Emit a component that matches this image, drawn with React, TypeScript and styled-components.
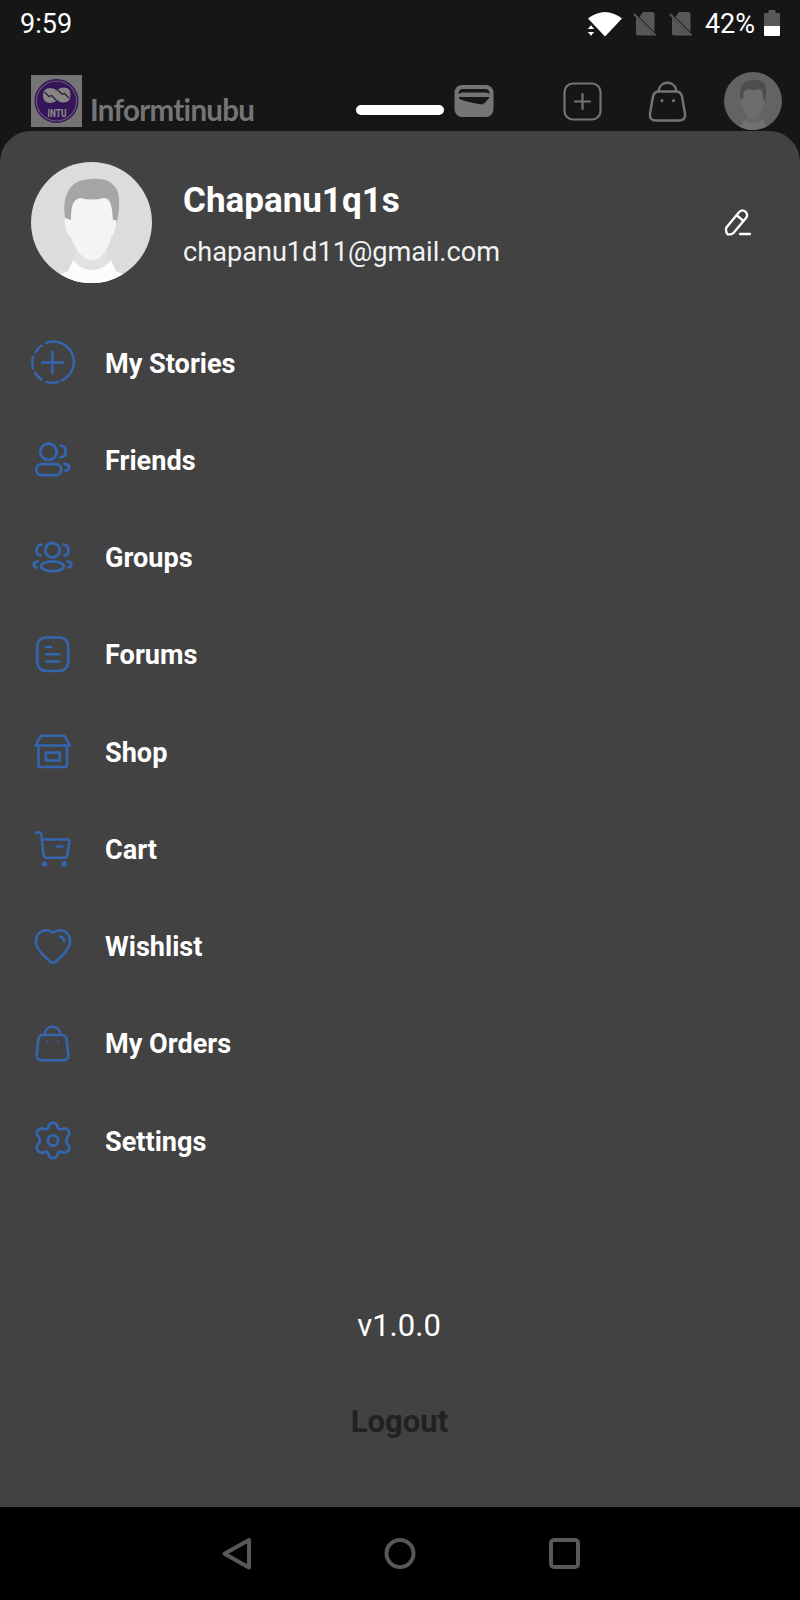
import React from "react";
import styled, { createGlobalStyle } from "styled-components";

const GlobalStyle = createGlobalStyle`
  *, *::before, *::after { box-sizing: border-box; }
  html, body { margin: 0; padding: 0; background: #161616; }
  body { font-family: Roboto, "Liberation Sans", sans-serif; color: #fff; }
  svg { display: block; flex: none; }
`;

const Screen = styled.div`
  width: 800px;
  height: 1600px;
  display: flex;
  flex-direction: column;
  background: #161616;
  overflow: hidden;
`;

const StatusBar = styled.header`
  height: 47px;
  display: flex;
  align-items: center;
  padding: 0 20px 0 20px;
  font-size: 27px;
  line-height: 46px;
`;

const Clock = styled.span`
  flex: 1;
`;

const StatusIcons = styled.div`
  display: flex;
  align-items: center;
`;

const Battery = styled.span`
  margin: 0 9px 0 12px;
  padding-top: 1px;
`;

const AppBar = styled.div`
  height: 84px;
  padding: 0 18px 0 31px;
  display: flex;
  align-items: flex-start;
`;

const Logo = styled.div`
  margin-top: 28px;
`;

const Brand = styled.span`
  flex: none;
  width: 274px;
  padding-left: 8px;
  margin-top: 44px;
  font-family: Lato, sans-serif;
  font-weight: 700;
  font-size: 29.500px;
  line-height: 38px;
  letter-spacing: -0.7px;
  font-variant-ligatures: none;
  color: #757575;
`;

const Grabber = styled.div`
  width: 88px;
  height: 10px;
  margin-top: 58px;
  border-radius: 5px;
  background: #fff;
`;

const Slot = styled.div<{ $left: number; $top: number }>`
  margin-left: ${(p) => p.$left}px;
  margin-top: ${(p) => p.$top}px;
`;

const Sheet = styled.main`
  height: 1376px;
  flex: none;
  display: flex;
  flex-direction: column;
  border-radius: 31px 31px 0 0;
  background: #424242;
`;

const Profile = styled.section`
  display: flex;
  align-items: center;
  height: 121px;
  margin-top: 31px;
  padding: 0 48px 0 31px;
`;

const ProfileText = styled.div`
  flex: 1;
  padding: 3px 0 0 31px;
`;

const Name = styled.h1`
  margin: 0;
  font-size: 35px;
  line-height: 44px;
  font-weight: 700;
`;

const Email = styled.p`
  margin: 11px 0 0;
  font-size: 27.150px;
  line-height: 36px;
  color: #f2f2f2;
`;

const Menu = styled.nav`
  display: flex;
  flex-direction: column;
  margin-top: 31px;
`;

const MenuItem = styled.a`
  display: flex;
  align-items: center;
  height: 97.25px;
  padding-left: 30px;
  gap: 30px;
  font-size: 27.100px;
  font-weight: 700;
  line-height: 36px;
`;

const MenuLabel = styled.span`
  padding-top: 2px;
`;

const Version = styled.p`
  margin: 117px 2px 0 0;
  text-align: center;
  font-size: 31px;
  line-height: 40px;
`;

const Logout = styled.button`
  margin: 56px auto 0;
  padding: 0 1px 0 0;
  border: 0;
  background: none;
  font: 700 31px/40px Roboto, "Liberation Sans", sans-serif;
  color: #212121;
`;

const NavBar = styled.footer`
  height: 93px;
  flex: none;
  display: flex;
  align-items: center;
  justify-content: center;
  gap: 129px;
  background: #000;
`;

/* Each glyph is drawn on a 45x45 grid centred on 22.5, 22.5. */
const Glyph = ({ children }: { children: React.ReactNode }) => (
  <svg width="45" height="45" viewBox="0 0 45 45" fill="none" stroke="#3366ae" strokeWidth="2.8" strokeLinecap="round" strokeLinejoin="round">
    {children}
  </svg>
);

const StoriesIcon = () => (
  <Glyph>
    <g strokeWidth="2.500">
      <path d="M16 3A20.300 20.300 0 0 1 32 40.300M28.500 41.900A20.300 20.300 0 0 1 16.500 41.900M11.500 39.600A20.300 20.300 0 0 1 5.300 33M3 28A20.300 20.300 0 0 1 3 16.800M5.400 12.300A20.300 20.300 0 0 1 11.500 5.800" />
      <path d="M22.500 12v21M12 22.500h21" />
    </g>
  </Glyph>
);

const FriendsIcon = () => (
  <Glyph>
    <circle cx="18.500" cy="14.700" r="8.200" />
    <rect x="6.200" y="27.200" width="25" height="11" rx="5.500" />
    <path d="M30.500 8.700c7 0 7 11.300 0 11.500M34.500 26.800c6 .8 6 5.700 1 6.800" />
  </Glyph>
);

const GroupsIcon = () => (
  <Glyph>
    <circle cx="22.500" cy="15.200" r="7.200" />
    <ellipse cx="22.500" cy="31.200" rx="11.300" ry="4.900" />
    <path d="M33.500 9.700c6.500 0 6.500 10.300 1 11M11.500 9.700c-6.500 0-6.500 10.300-1 11M37.500 26.500c5 1 5 4.500 .8 6M7.500 26.500c-5 1-5 4.500-.8 6" />
  </Glyph>
);

const ForumsIcon = () => (
  <Glyph>
    <rect x="7.200" y="5.500" width="31" height="33.500" rx="8.500" strokeWidth="2.600" />
    <path d="M16 15h5M16 22.300h13.500M16 29.600h13.500" strokeWidth="2.500" />
  </Glyph>
);

const ShopIcon = () => (
  <Glyph>
    <path d="M11 6.800h23.500l5.500 9.700H5.500zM8.500 16.500v19.500q0 2 2 2h24.500q2 0 2-2v-19.500M15.800 23.500h14v8h-14z" strokeWidth="2.600" />
  </Glyph>
);

const CartIcon = () => (
  <Glyph>
    <path d="M6 6.500h3.500q1.500 0 1.700 1.700l2.300 20.500q.3 3 3 3h18q2.500 0 2.800-2.600l1.900-13q.3-2.600-2.300-2.600H12M26.500 20.500h6" strokeWidth="2.500" />
    <g fill="#3366ae" stroke="none">
      <circle cx="14.500" cy="38" r="2.700" />
      <circle cx="34.300" cy="38" r="2.700" />
    </g>
  </Glyph>
);

const HeartIcon = () => (
  <Glyph>
    <path d="M23 8.800C16.500 3.800 6 6.500 6 17.500 6 25.500 16 34 20.800 38q2.200 1.700 4.400 0C30 34 40 25.500 40 17.500 40 6.500 29.500 3.800 23 8.800Z" strokeWidth="2.500" />
    <path d="M30 12.500q4 .8 4.200 4.500" />
  </Glyph>
);

const BagIcon = () => (
  <Glyph>
    <path d="M13.500 14h18q4.500 0 5.200 4.500l1.500 15q.6 5.800-5.500 5.800H12.200q-6.100 0-5.500-5.800l1.600-15q.7-4.500 5.200-4.500ZM14.500 13.500c1-10.500 15-10.500 16 0" strokeWidth="2.500" />
    <path d="M17.300 20.500v.1M28 20.500v.1" strokeWidth="2.200" />
  </Glyph>
);

const GearIcon = () => (
  <Glyph>
    <circle cx="23" cy="22.500" r="5.200" />
    <path d="M18.500 9C18.500 3.500 27.500 3.500 27.500 9 28 11 29.500 11.800 31.800 11 37 8 42 15.500 37.500 19 36 20.300 36 24.700 37.500 26 42 29.500 37 37 31.800 34 29.500 33.200 28 34 27.500 36 27.500 41.500 18.500 41.500 18.500 36 18 34 16.500 33.200 14.200 34 9 37 4 29.500 8.500 26 10 24.700 10 20.300 8.500 19 4 15.500 9 8 14.200 11 16.500 11.800 18 11 18.500 9Z" />
  </Glyph>
);

const items: { label: string; Icon: () => React.JSX.Element }[] = [
  { label: "My Stories", Icon: StoriesIcon },
  { label: "Friends", Icon: FriendsIcon },
  { label: "Groups", Icon: GroupsIcon },
  { label: "Forums", Icon: ForumsIcon },
  { label: "Shop", Icon: ShopIcon },
  { label: "Cart", Icon: CartIcon },
  { label: "Wishlist", Icon: HeartIcon },
  { label: "My Orders", Icon: BagIcon },
  { label: "Settings", Icon: GearIcon },
];

type AvatarColors = { bg: string; hair: string; face: string; shirt: string; neck: string };
const bright: AvatarColors = { bg: "#dcdcdc", hair: "#a6a6a6", face: "#f4f4f4", shirt: "#fcfcfc", neck: "#e2e2e2" };
const dimmed: AvatarColors = { bg: "#636363", hair: "#4d4d4d", face: "#6d6d6d", shirt: "#717171", neck: "#676767" };

const Avatar = ({ size, colors, id }: { size: number; colors: AvatarColors; id: string }) => (
  <svg width={size} height={size} viewBox="0 0 121 121">
    <clipPath id={id}>
      <circle cx="60.500" cy="60.500" r="60.500" />
    </clipPath>
    <g clipPath={`url(#${id})`}>
      <rect width="121" height="121" fill={colors.bg} />
      <path d="M44 90h33v14l3 17H40l4-17z" fill={colors.neck} />
      <path d="M42 98l-5 11-14 6v7h75v-7l-13-6-5-11-2 2q-5 7-17 8-12-1-17-8z" fill={colors.shirt} />
      <path d="M35 61C30 37 36 17 61 17c13-1 19 3 21 6 8 6 7 22 4 37l-8 4H40z" fill={colors.hair} />
      <path d="M40 58c0-12 1-20 9-22q12 3 24 0c7 0 8 9 9 22l3 0q1 2-1 9-1 6-4 8C77 88 70 98 61 98S44 88 40 75q-4-2-5-8-2-7-1-11z" fill={colors.face} />
    </g>
  </svg>
);

const LogoMark = () => (
  <svg width="51" height="52" viewBox="0 0 51 52">
    <rect width="51" height="52" fill="#747474" />
    <circle cx="25.500" cy="26" r="21.300" fill="#6a5d78" stroke="#351458" strokeWidth="1.400" />
    <circle cx="25.500" cy="26" r="19.500" fill="#351458" />
    <g fill="#858585">
      <path d="M12 20q0-7 7.500-7 4 0 6.500 2.500Q28.500 12.500 33 12.500q6.500 0 6.500 7 0 8-7 8-4 0-6.500-2.500-2.500 3-7 3-7 0-7-8z" />
    </g>
    <path d="M13.500 17l4.500 4.500 2.500-1 5 5M26.500 15l4.500 4 2.500-.5 4.500 4.500" fill="none" stroke="#2c2032" strokeWidth="1.300" />
    <text x="26" y="41.500" textAnchor="middle" textLength="19" lengthAdjust="spacingAndGlyphs" fontFamily="Roboto" fontWeight="900" fontSize="11" fill="#858585">INTU</text>
  </svg>
);

const NoSim = () => (
  <svg width="24" height="26" viewBox="0 0 24 26">
    <path d="M10 1h9.500q2 0 2 2v18L6.500 6zM3 6.500L21 24.500H5q-2 0-2-2z" fill="#585858" />
    <path d="M1 3l21.500 21.500" stroke="#585858" strokeWidth="2" />
  </svg>
);

const App = () => (
  <Screen>
    <GlobalStyle />
    <StatusBar>
      <Clock>9:59</Clock>
      <StatusIcons>
        <svg width="36" height="26" viewBox="0 0 36 26" fill="#fff">
          <path d="M1 7.500Q18-5.500 35 7.500L18 25.500z" />
          <path d="M0 18.500l4-5 4 5zM0 20.500h8l-4 5z" stroke="#161616" strokeWidth="1" />
        </svg>
        <Slot $left={10} $top={0}><NoSim /></Slot>
        <Slot $left={12} $top={0}><NoSim /></Slot>
        <Battery>42%</Battery>
        <svg width="16" height="27" viewBox="0 0 16 27">
          <path d="M4.500 0h7v3H15q1 0 1 1v12H0V4q0-1 1-1h3.500z" fill="#585858" />
          <path d="M0 16h16v9q0 1-1 1H1q-1 0-1-1z" fill="#fff" />
        </svg>
      </StatusIcons>
    </StatusBar>
    <AppBar>
      <Logo><LogoMark /></Logo>
      <Brand>Informtinubu</Brand>
      <div><Grabber /></div>
      <Slot $left={10} $top={38}>
        <svg width="40" height="33" viewBox="0 0 40 33">
          <rect x=".5" width="39" height="32" rx="7.500" fill="#757575" />
          <path d="M4.500 8Q5 4 9 4h22q4 0 4.500 4v1q-1-1.500-4-1.500H9q-3 0-4.500 1.500zM5 12h30.500q-1 2-3 4-2 3-4.500 3.500-8-1-14-2.700-7-1.800-9-3.300z" fill="#161616" />
        </svg>
      </Slot>
      <Slot $left={69} $top={35}>
        <svg width="40" height="40" viewBox="0 0 40 40" fill="none" stroke="#757575" strokeWidth="2.200" strokeLinecap="round">
          <rect x="1.500" y="1.500" width="36" height="36" rx="8.500" />
          <path d="M19.500 12v15M12 19.500h15" />
        </svg>
      </Slot>
      <Slot $left={45} $top={34}>
        <svg width="40" height="42" viewBox="0 0 40 42" fill="none" stroke="#757575" strokeWidth="2.400" strokeLinecap="round">
          <path d="M11 10.500h17q5 0 6 5l3 17q1 7-6 7H8q-7 0-6-7l3-17q1-5 6-5ZM10.500 10C12-1 27-1 28.500 10" />
          <path d="M14 19.500v.2M25.500 19.500v.2" strokeWidth="3" />
        </svg>
      </Slot>
      <Slot $left={36} $top={25}><Avatar size={58} colors={dimmed} id="avatar-small" /></Slot>
    </AppBar>
    <Sheet>
      <Profile>
        <Avatar size={121} colors={bright} id="avatar-large" />
        <ProfileText>
          <Name>Chapanu1q1s</Name>
          <Email>chapanu1d11@gmail.com</Email>
        </ProfileText>
        <svg width="28" height="30" viewBox="0 0 28 30" fill="none" stroke="#fff" strokeWidth="2.300" strokeLinecap="round" strokeLinejoin="round">
          <path d="M2.200 19.800L15.200 4q3-3 6.200-.4 3 2.900.8 6.200L9.500 25l-2.300 1.300H3.500Q1.500 24 2.200 19.800ZM13 7.500l6.300 5.300M16 26h10" />
        </svg>
      </Profile>
      <Menu>
        {items.map(({ label, Icon }) => (
          <MenuItem key={label}>
            <Icon />
            <MenuLabel>{label}</MenuLabel>
          </MenuItem>
        ))}
      </Menu>
      <Version>v1.0.0</Version>
      <Logout>Logout</Logout>
    </Sheet>
    <NavBar>
      <svg width="36" height="36" viewBox="0 0 36 36" fill="none" stroke="#585858" strokeWidth="4" strokeLinejoin="round">
        <path d="M32 4v27.500L7.500 17.700z" />
      </svg>
      <svg width="36" height="36" viewBox="0 0 36 36" fill="none" stroke="#585858" strokeWidth="4">
        <circle cx="18" cy="17.500" r="13.500" />
      </svg>
      <svg width="36" height="36" viewBox="0 0 36 36" fill="none" stroke="#585858" strokeWidth="4">
        <rect x="4" y="4" width="27" height="27" rx="3" />
      </svg>
    </NavBar>
  </Screen>
);

export default App;
